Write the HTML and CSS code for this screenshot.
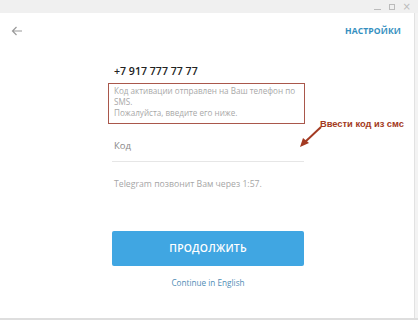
FILE: index.html
```html
<!DOCTYPE html>
<html>
<head>
<meta charset="utf-8">
<link rel="stylesheet" href="styles.css">
</head>
<body>
<div class="window">
  <div class="titlebar">
    <span class="ctl min"></span>
    <span class="ctl max"></span>
    <span class="ctl close">×</span>
  </div>
  <div class="main">
    <div class="panel">
      <div class="topbar">
        <svg class="back" width="12" height="10" viewBox="0 0 12 10"><path d="M11 5H1.5M5.5 1L1.5 5L5.5 9" fill="none" stroke="#9a9a9a" stroke-width="1.2"/></svg>
        <span class="settings">НАСТРОЙКИ</span>
      </div>
      <div class="form">
        <div class="phone">+7 917 777 77 77</div>
        <div class="note">Код активации отправлен на Ваш телефон по SMS.<br>Пожалуйста, введите его ниже.</div>
        <div class="field">Код</div>
        <div class="call">Telegram позвонит Вам через 1:57.</div>
        <div class="btn">ПРОДОЛЖИТЬ</div>
        <div class="eng">Continue in English</div>
      </div>
      <div class="annot">
        <svg class="arrow" width="24" height="22" viewBox="0 0 24 22"><path d="M22 1L6 16" stroke="#a33a22" stroke-width="2" fill="none"/><path d="M1 21L4 12L10 17Z" fill="#a33a22"/></svg>
        <span class="annot-text">Ввести код из смс</span>
      </div>
    </div>
    <div class="side"></div>
  </div>
  <div class="bottom"></div>
</div>
</body>
</html>
```
FILE: styles.css
```css
* { box-sizing: border-box; }
html, body { margin: 0; padding: 0; }
body {
  width: 418px; height: 320px; overflow: hidden;
  font-family: "Open Sans", "Noto Sans", sans-serif;
  background: #f0f0f0;
}
.window { display: flex; flex-direction: column; height: 320px; }
.titlebar {
  height: 13px; background: #f0f0f0;
  display: flex; justify-content: flex-end; align-items: center;
  gap: 8px; padding-right: 7px;
}
.ctl { display: block; color: #bbb; }
.min { width: 7px; height: 1px; background: #bbb; margin-top: 5px; }
.max { width: 6px; height: 6px; border: 1px solid #bbb; }
.close { font-size: 10px; line-height: 10px; font-family: "DejaVu Sans", sans-serif; }
.main { flex: 1; display: flex; }
.panel {
  position: relative; width: 415px; background: #fff;
  border-right: 1px solid #e2e2e2;
}
.side { flex: 1; background: #f3f3f3; }
.bottom { height: 2px; background: #dedede; }
.topbar {
  display: flex; justify-content: space-between; align-items: center;
  padding: 12px 13px 0 11px; height: 24px;
}
.back { display: block; margin-top: 0; }
.settings {
  color: #358fc0; font-weight: 700; font-size: 8.6px; letter-spacing: 0.1px;
}
.form {
  width: 192px; margin-left: 112px; margin-top: 27px;
  display: flex; flex-direction: column;
}
.phone {
  font-weight: 600; font-size: 10.6px; color: #222; padding-left: 2px; line-height: 14px;
}
.note {
  margin: 5px 0 0 -4px; width: 197px;
  border: 1.5px solid #a9574b;
  padding: 1px 4px 4px 5px;
  font-size: 8.1px; line-height: 11.2px; color: #a8a8a8;
}
.field {
  margin-top: 15px; font-size: 9.5px; color: #888; padding-left: 2px;
  height: 23px; border-bottom: 1px solid #e6e6e6; line-height: 14px;
}
.call {
  margin-top: 16px; font-size: 8.7px; color: #a6a6a6; padding-left: 2px;
}
.btn {
  margin-top: 41px; height: 35px; background: #40a6e2; border-radius: 2px;
  color: #fff; font-size: 10.4px; font-weight: 600; letter-spacing: 0.2px;
  display: flex; align-items: center; justify-content: center;
}
.eng {
  margin-top: 11px; text-align: center; font-size: 8.2px; color: #4f8db6;
}
.annot {
  position: absolute; left: 299px; top: 105px;
  display: flex; align-items: flex-start;
}
.arrow { display: block; margin-top: 8px; }
.annot-text {
  color: #a33a22; font-weight: 700; font-size: 9.3px; margin-left: -3px; line-height: 12px;
  font-family: "Liberation Sans", Arial, sans-serif;
}
```
